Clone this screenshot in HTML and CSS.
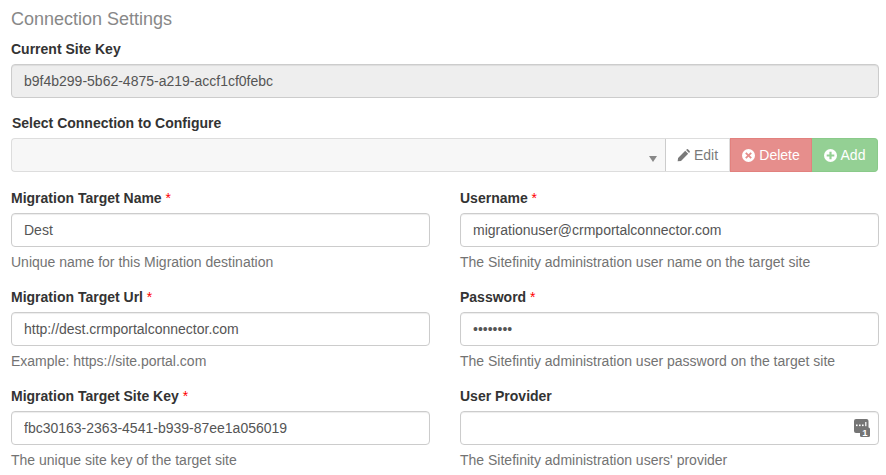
FILE: index.html
```html
<!DOCTYPE html>
<html lang="en">
<head>
<meta charset="utf-8">
<title>Connection Settings</title>
<link rel="stylesheet" href="styles.css">
</head>
<body>
<main class="page">
  <h1 class="title">Connection Settings</h1>
  <div class="group">
    <label class="label">Current Site Key</label>
    <input class="input input-readonly" type="text" value="b9f4b299-5b62-4875-a219-accf1cf0febc" readonly>
  </div>
  <div class="group group-select">
    <label class="label label-select">Select Connection to Configure</label>
    <div class="picker">
      <div class="select"><span class="caret"></span></div>
      <button class="btn btn-edit" type="button">
        <svg class="icon" viewBox="0 0 12 12"><path d="M0.6 11.4 1 8.3 7.6 1.7 10.3 4.4 3.7 11ZM8.4 0.9 9.1 0.3Q9.6-0.1 10.1 0.3L11.7 1.9Q12.1 2.4 11.7 2.9L11.1 3.6Z"/></svg>Edit</button>
      <button class="btn btn-delete" type="button">
        <svg class="icon" viewBox="0 0 12 12"><path fill-rule="evenodd" d="M6 0a6 6 0 1 0 0 12A6 6 0 0 0 6 0ZM4.1 2.9 6 4.8 7.9 2.9 9.1 4.1 7.2 6 9.1 7.9 7.9 9.1 6 7.2 4.1 9.1 2.9 7.9 4.8 6 2.9 4.1Z"/></svg>Delete</button>
      <button class="btn btn-add" type="button">
        <svg class="icon" viewBox="0 0 12 12"><path fill-rule="evenodd" d="M6 0a6 6 0 1 0 0 12A6 6 0 0 0 6 0ZM5 2.5H7V5H9.5V7H7V9.5H5V7H2.5V5H5Z"/></svg>Add</button>
    </div>
  </div>
  <div class="grid">
    <div class="group">
      <label class="label">Migration Target Name <span class="req">*</span></label>
      <input class="input" type="text" value="Dest">
      <p class="help">Unique name for this Migration destination</p>
    </div>
    <div class="group">
      <label class="label">Username <span class="req">*</span></label>
      <input class="input" type="text" value="migrationuser@crmportalconnector.com">
      <p class="help">The Sitefinity administration user name on the target site</p>
    </div>
    <div class="group">
      <label class="label">Migration Target Url <span class="req">*</span></label>
      <input class="input" type="text" value="http://dest.crmportalconnector.com">
      <p class="help">Example: https://site.portal.com</p>
    </div>
    <div class="group">
      <label class="label">Password <span class="req">*</span></label>
      <input class="input" type="password" value="password">
      <p class="help">The Sitefintiy administration user password on the target site</p>
    </div>
    <div class="group">
      <label class="label">Migration Target Site Key <span class="req">*</span></label>
      <input class="input" type="text" value="fbc30163-2363-4541-b939-87ee1a056019">
      <p class="help">The unique site key of the target site</p>
    </div>
    <div class="group">
      <label class="label">User Provider</label>
      <div class="field-wrap">
        <input class="input" type="text">
        <svg class="field-icon" viewBox="0 0 16 18">
          <rect x="0" y="0" width="14.5" height="14" rx="2" fill="#757575"/>
          <rect x="2" y="5.5" width="1.6" height="1.6" fill="#fff"/>
          <rect x="5" y="5.5" width="1.6" height="1.6" fill="#fff"/>
          <rect x="8" y="5.5" width="1.6" height="1.6" fill="#fff"/>
          <rect x="11.2" y="3" width="1.2" height="4.2" fill="#fff"/>
          <rect x="6" y="8.5" width="10" height="9.5" rx="1.5" fill="#757575"/>
          <text class="field-icon-text" x="11" y="17" text-anchor="middle">1</text>
        </svg>
      </div>
      <p class="help">The Sitefinity administration users' provider</p>
    </div>
  </div>
</main>
</body>
</html>
```
FILE: styles.css
```css
* { box-sizing: border-box; }
html, body { margin: 0; padding: 0; background: #fff; }
body {
  font-family: "Liberation Sans", Arial, sans-serif;
  font-size: 14px;
  line-height: 20px;
  color: #333;
  overflow: hidden;
  height: 475px;
}
.page { padding: 9px 7px 0 11px; }
.title {
  margin: 0 0 10px;
  font-size: 18px;
  line-height: 20px;
  font-weight: 400;
  color: #888;
}
.group { margin-bottom: 15px; min-width: 0; }
.group-select { margin-bottom: 16px; }
.label {
  display: block;
  margin-bottom: 5px;
  font-weight: 700;
  color: #333;
}
.label-select { padding-left: 1px; }
.req { color: #f00; font-weight: 400; }
.input {
  display: block;
  width: 100%;
  height: 34px;
  padding: 6px 12px;
  font: inherit;
  color: #555;
  background: #fff;
  border: 1px solid #ccc;
  border-radius: 4px;
  box-shadow: inset 0 1px 1px rgba(0,0,0,.075);
  outline: none;
}
.input-readonly { background: #eee; }
.picker { display: flex; height: 34px; margin-right: 1px; }
.select {
  flex: 1;
  position: relative;
  background: #f7f7f7;
  border: 1px solid #ddd;
  border-right: 1px solid #ccc;
  border-radius: 4px 0 0 4px;
}
.caret {
  position: absolute;
  right: 8px;
  top: 17px;
  border-left: 4px solid transparent;
  border-right: 4px solid transparent;
  border-top: 6px solid #888;
}
.btn {
  display: flex;
  align-items: center;
  justify-content: center;
  height: 34px;
  padding: 0;
  font: inherit;
  border: 1px solid transparent;
  border-left-width: 0;
  opacity: .65;
}
.icon { width: 13px; height: 13px; margin-right: 4px; fill: currentColor; }
.btn-edit { width: 64px; color: #333; background: #fff; border-color: #ccc; border-left-width: 0; }
.btn-delete { width: 82px; color: #fff; background: #d9534f; border-color: #d43f3a; border-left-width: 1px; }
.btn-add { width: 66px; color: #fff; background: #5cb85c; border-color: #4cae4c; border-left-width: 0; border-radius: 0 4px 4px 0; }
.grid { display: grid; grid-template-columns: 1fr 1fr; column-gap: 30px; }
.help { margin: 5px 0 0; color: #737373; }
.field-wrap { position: relative; }
.field-icon { position: absolute; right: 9px; top: 8px; width: 16px; height: 18px; }
.field-icon-text { font-size: 9.5px; font-weight: 700; fill: #fff; }
```
